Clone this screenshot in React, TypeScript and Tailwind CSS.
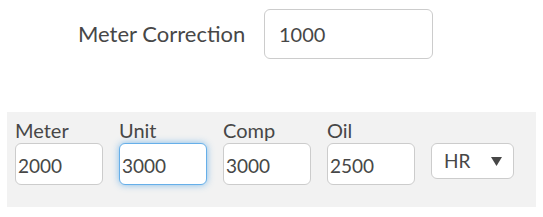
const fields = [
  { label: "Meter", value: "2000", focused: false },
  { label: "Unit", value: "3000", focused: true },
  { label: "Comp", value: "3000", focused: false },
  { label: "Oil", value: "2500", focused: false },
];

export default function App() {
  return (
    <div
      className="w-[543px] h-[217px] bg-white text-[#474747]"
      style={{ fontFamily: "Lato, 'Open Sans', sans-serif" }}
    >
      <div className="flex items-center pt-[9px] pl-[78px]">
        <label className="text-[22px] leading-none w-[186px]">Meter Correction</label>
        <input
          readOnly
          value="1000"
          className="w-[169px] h-[50px] rounded-[6px] border border-[#ccc] bg-white pl-[14px] text-[20px] text-[#474747] outline-none"
        />
      </div>

      <div className="mt-[53px] mx-[7px] h-[95px] bg-[#f2f2f2] pl-[8px] pt-[6px] flex gap-[16px]">
        {fields.map((f) => (
          <div key={f.label} className="flex flex-col">
            <span className="text-[20px] leading-[25px] h-[25px]">{f.label}</span>
            <input
              readOnly
              value={f.value}
              className={
                f.focused
                  ? "w-[88px] h-[42px] rounded-[6px] border border-[#66afe9] bg-white pl-[2px] pt-[2px] text-[19px] text-[#474747] outline-none shadow-[0_0_7px_rgba(102,175,233,0.8)]"
                  : "w-[88px] h-[42px] rounded-[6px] border border-[#ccc] bg-white pl-[2px] pt-[2px] text-[19px] text-[#474747] outline-none"
              }
            />
          </div>
        ))}
        <div className="flex flex-col pt-[25px]">
          <div className="w-[83px] h-[36px] rounded-[6px] border border-[#ccc] bg-white flex items-center justify-between pl-[12px] pr-[11px]">
            <span className="text-[19px]">HR</span>
            <svg width="11" height="9" viewBox="0 0 11 9">
              <path d="M0 0 H11 L5.5 9 Z" fill="#474747" />
            </svg>
          </div>
        </div>
      </div>
    </div>
  );
}
